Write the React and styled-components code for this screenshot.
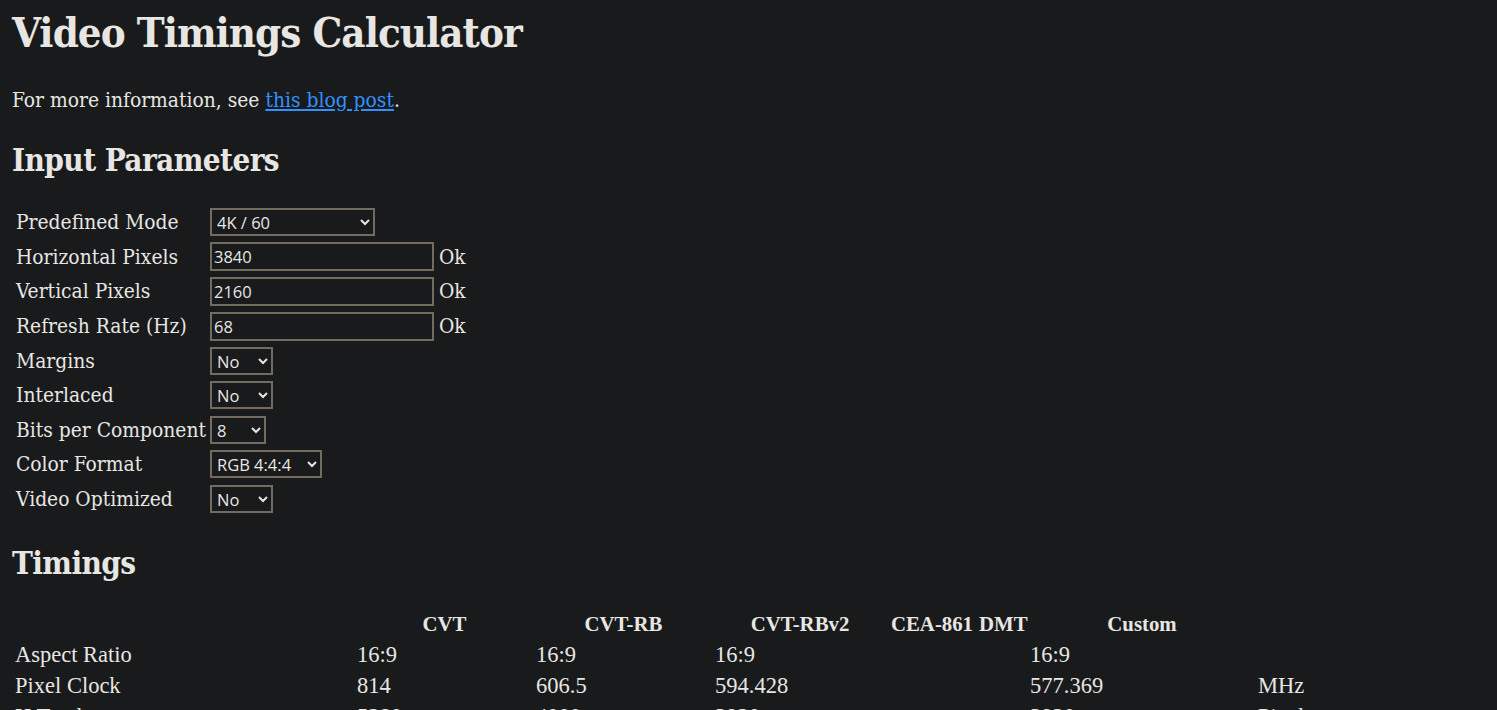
import styled, { createGlobalStyle } from "styled-components";

const GlobalStyle = createGlobalStyle`
  html, body {
    margin: 0;
    background: #181a1b;
  }
  body {
    padding: 0 12px;
    color: #e8e6e3;
    font-family: "DejaVu Serif", "Liberation Serif", serif;
    font-stretch: condensed;
    font-size: 20.8px;
  }
`;

const fields = [
  { label: "Predefined Mode", kind: "select", value: "4K / 60", width: 165 },
  { label: "Horizontal Pixels", kind: "input", value: "3840" },
  { label: "Vertical Pixels", kind: "input", value: "2160" },
  { label: "Refresh Rate (Hz)", kind: "input", value: "68" },
  { label: "Margins", kind: "select", value: "No", width: 63 },
  { label: "Interlaced", kind: "select", value: "No", width: 63 },
  { label: "Bits per Component", kind: "select", value: "8", width: 56 },
  { label: "Color Format", kind: "select", value: "RGB 4:4:4", width: 112 },
  { label: "Video Optimized", kind: "select", value: "No", width: 63 },
];

const columns = ["CVT", "CVT-RB", "CVT-RBv2", "CEA-861", "DMT", "Custom", ""];

const timings = [
  { label: "Aspect Ratio", values: ["16:9", "16:9", "16:9", "", "", "16:9", ""] },
  { label: "Pixel Clock", values: ["814", "606.5", "594.428", "", "", "577.369", "MHz"] },
  { label: "H Total", values: ["5280", "4000", "3920", "", "", "3920", "Pixels"] },
];

const App = () => {
  return (
    <>
      <GlobalStyle />
      <Title>Video Timings Calculator</Title>
      <Intro>
        For more information, see <a href="#post">this blog post</a>.
      </Intro>
      <Heading>Input Parameters</Heading>
      <FormTable>
        <tbody>
          {fields.map((f) => (
            <tr key={f.label}>
              <FieldLabel>{f.label}</FieldLabel>
              <td>
                {f.kind === "select" ? (
                  <Select $width={f.width} defaultValue={f.value}>
                    <option>{f.value}</option>
                  </Select>
                ) : (
                  <>
                    <TextInput defaultValue={f.value} />
                    <Status>Ok</Status>
                  </>
                )}
              </td>
            </tr>
          ))}
        </tbody>
      </FormTable>
      <Heading $top={27}>Timings</Heading>
      <TimingGrid>
        <Cell />
        {columns.map((c, i) => (
          <HeadCell key={i}>{c}</HeadCell>
        ))}
        {timings.map((row) => (
          <TimingRow key={row.label}>
            <Cell>{row.label}</Cell>
            {row.values.map((v, i) => (
              <Cell key={i}>{v}</Cell>
            ))}
          </TimingRow>
        ))}
      </TimingGrid>
    </>
  );
};

const Title = styled.h1`
  margin: 0;
  padding-top: 10px;
  font-size: 41.6px;
  line-height: 46px;
  letter-spacing: -0.95px;
`;

const Intro = styled.p`
  margin: 30px 0 0;
  line-height: 28px;

  a {
    color: #3391ff;
  }
`;

const Heading = styled.h2`
  margin: ${(p) => p.$top ?? 27}px 0 0;
  font-size: 31.2px;
  line-height: 38px;
  letter-spacing: -0.6px;
`;

const FormTable = styled.table`
  margin: 25px 0 0 1px;
  border-spacing: 2px;

  td {
    padding: 1px;
    height: 30.6px;
  }
`;

const FieldLabel = styled.td`
  white-space: nowrap;
`;

const controlBase = `
  box-sizing: border-box;
  background: #181a1b;
  color: #e8e6e3;
  border: 2px solid #736b5e;
  font-family: "Open Sans", "Noto Sans", sans-serif;
  font-size: 16.5px;
  font-stretch: normal;
  vertical-align: middle;
`;

const Select = styled.select`
  ${controlBase}
  width: ${(p) => p.$width}px;
  height: 28px;
  padding: 0 2px 0 1px;
  color-scheme: dark;
`;

const TextInput = styled.input`
  ${controlBase}
  width: 224px;
  height: 29px;
  padding: 0 2px;
`;

const Status = styled.span`
  margin-left: 5px;
  vertical-align: middle;
`;

const TimingGrid = styled.div`
  margin-top: 27px;
  padding: 0 2px;
  display: grid;
  grid-template-columns: 340px 177px 177px 172px 88px 49px 226px 1fr;
  column-gap: 2px;
  row-gap: 2px;
  font-family: "Liberation Serif", serif;
  font-stretch: normal;
`;

const TimingRow = styled.div`
  display: contents;
`;

const Cell = styled.div`
  padding: 1px;
  height: 27px;
  line-height: 27px;
  font-size: 22.5px;
  white-space: nowrap;
`;

const HeadCell = styled(Cell)`
  font-size: 20.8px;
  font-weight: bold;
  text-align: center;
`;

export default App;
